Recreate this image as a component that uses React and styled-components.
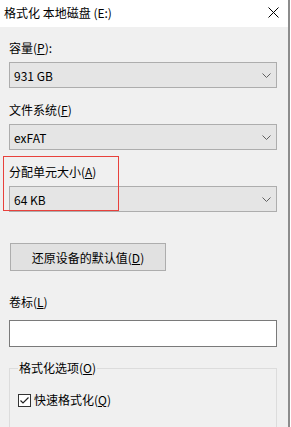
import React, { useState } from "react";
import styled, { createGlobalStyle } from "styled-components";

const GlobalStyle = createGlobalStyle`
  html, body {
    margin: 0;
    padding: 0;
    background: #ffffff;
  }
  body {
    font-family: "Noto Sans CJK SC", "Noto Sans", sans-serif;
    font-size: 12px;
    color: #000;
  }
`;

const Frame = styled.div`
  display: flex;
  width: 291px;
  height: 427px;
  overflow: hidden;
`;

const Window = styled.div`
  width: 288px;
  display: flex;
  flex-direction: column;
  background: #f0f0f0;
  border-right: 2px solid #8c8c8c;
  box-sizing: content-box;
  & > * {
    flex-shrink: 0;
  }
`;

const TitleBar = styled.div`
  height: 27px;
  background: #ffffff;
  display: flex;
  align-items: center;
  justify-content: space-between;
  padding: 0 9px 2px 4px;
  box-sizing: border-box;
  font-size: 12px;
`;

const Body = styled.div`
  display: flex;
  flex-direction: column;
  padding: 13px 0 0 9px;
  & > * {
    flex-shrink: 0;
  }
`;

const Label = styled.div`
  line-height: 16px;
  height: 16px;
  margin-top: ${(p) => p.$top || 0}px;
  margin-bottom: ${(p) => p.$bottom ?? 6}px;
  white-space: nowrap;
`;

const SelectBox = styled.div`
  width: 268px;
  height: 26px;
  box-sizing: border-box;
  border: 1px solid #adadad;
  background: #e5e5e5;
  display: flex;
  align-items: center;
  justify-content: space-between;
  padding: 0 5px 0 4px;
  cursor: default;
`;

const Highlight = styled.div`
  position: relative;
  display: flex;
  flex-direction: column;
  margin-top: 14px;
  &::after {
    content: "";
    position: absolute;
    left: -6px;
    top: -8px;
    width: 116px;
    height: 55px;
    border: 1px solid #e8413c;
    box-sizing: border-box;
    pointer-events: none;
  }
`;

const Button = styled.button`
  margin-top: 31px;
  margin-left: 1px;
  width: 156px;
  height: 28px;
  border: 1px solid #adadad;
  background: #e1e1e1;
  font-family: inherit;
  font-size: 12px;
  color: #000;
  padding: 0;
`;

const TextInput = styled.input`
  width: 268px;
  height: 27px;
  box-sizing: border-box;
  border: 1px solid #7a7a7a;
  background: #fff;
  font-family: inherit;
  font-size: 12px;
  outline: none;
`;

const Group = styled.fieldset`
  margin: 13px 0 0 0;
  width: 268px;
  box-sizing: border-box;
  border: 1px solid #dcdcdc;
  padding: 0 8px 40px 8px;
  min-height: 80px;
  legend {
    padding: 0 1px;
    margin-left: 0;
    line-height: 16px;
  }
`;

const CheckRow = styled.label`
  display: flex;
  align-items: center;
  gap: 3px;
  margin-top: 16px;
  line-height: 16px;
`;

const CheckBox = styled.span`
  width: 13px;
  height: 13px;
  box-sizing: border-box;
  border: 1px solid #333;
  background: #fff;
  display: flex;
  align-items: center;
  justify-content: center;
`;

function Chevron() {
  return (
    <svg width="9" height="5" viewBox="0 0 9 5">
      <path d="M0.5 0.5 L4.5 4.5 L8.5 0.5" fill="none" stroke="#606060" strokeWidth="1" />
    </svg>
  );
}

function Select({ value }) {
  return (
    <SelectBox>
      <span>{value}</span>
      <Chevron />
    </SelectBox>
  );
}

export default function App() {
  const [quick, setQuick] = useState(true);
  return (
    <Frame>
      <GlobalStyle />
      <Window>
        <TitleBar>
          <span>格式化 本地磁盘 (E:)</span>
          <svg width="11" height="11" viewBox="0 0 11 11">
            <path d="M0.5 0.5 L10.5 10.5 M10.5 0.5 L0.5 10.5" stroke="#000" strokeWidth="1" />
          </svg>
        </TitleBar>
        <Body>
          <Label>
            容量(<u>P</u>):
          </Label>
          <Select value="931 GB" />
          <Label $top={14}>
            文件系统(<u>F</u>)
          </Label>
          <Select value="exFAT" />
          <Highlight>
            <Label>
              分配单元大小(<u>A</u>)
            </Label>
            <Select value="64 KB" />
          </Highlight>
          <Button>
            还原设备的默认值(<u>D</u>)
          </Button>
          <Label $top={23} $bottom={10}>
            卷标(<u>L</u>)
          </Label>
          <TextInput />
          <Group>
            <legend>
              格式化选项(<u>O</u>)
            </legend>
            <CheckRow onClick={() => setQuick(!quick)}>
              <CheckBox>
                {quick && (
                  <svg width="11" height="11" viewBox="0 0 11 11">
                    <path d="M1.5 5.5 L4 8 L9.5 2.5" fill="none" stroke="#222" strokeWidth="1.2" />
                  </svg>
                )}
              </CheckBox>
              <span>
                快速格式化(<u>Q</u>)
              </span>
            </CheckRow>
          </Group>
        </Body>
      </Window>
    </Frame>
  );
}
